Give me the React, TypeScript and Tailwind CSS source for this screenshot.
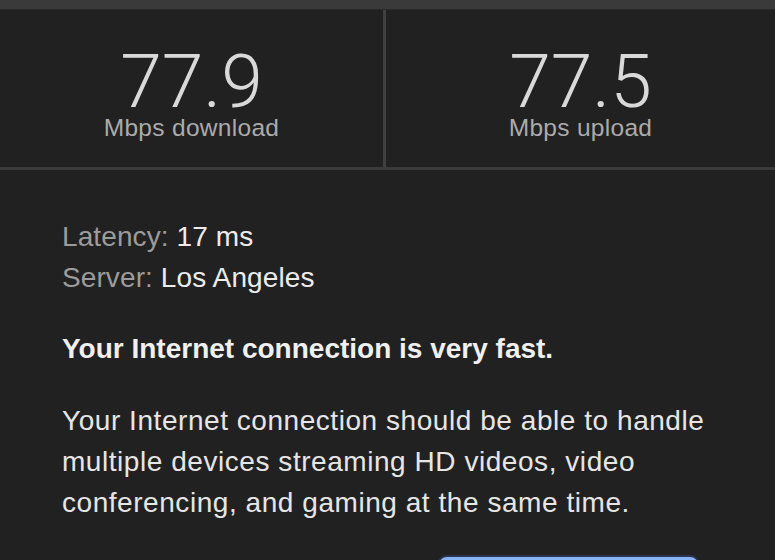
import React from "react";

export default function App() {
  const body = { fontFamily: '"Liberation Sans", Arial, sans-serif' };
  const num = { fontFamily: 'Roboto, "Liberation Sans", sans-serif' };
  return (
    <div className="w-[775px] h-[560px] overflow-hidden bg-[#212121]" style={body}>
      <div className="h-[10px] bg-[#3a3a3a] border-b border-[#2a2a2a]" />
      <div className="grid grid-cols-[386px_1fr] h-[160px] border-b-[3px] border-[#3a3a3a]">
        <div className="flex flex-col items-center pt-[38px] border-r-[3px] border-[#404040]">
          <div className="text-[75px] leading-[66px] font-light text-[#d9d9d9]" style={num}>77.9</div>
          <div className="text-[24.5px] leading-[28px] tracking-[0.3px] text-[#ababab]">Mbps download</div>
        </div>
        <div className="flex flex-col items-center pt-[38px]">
          <div className="text-[75px] leading-[66px] font-light text-[#d9d9d9]" style={num}>77.5</div>
          <div className="text-[24.5px] leading-[28px] tracking-[0.3px] text-[#ababab]">Mbps upload</div>
        </div>
      </div>
      <div className="px-[62px] pt-[46px] text-[28px] leading-[41px] tracking-[0.55px]">
        <div className="tracking-[0.1px]">
          <span className="text-[#9c9c9c]">Latency: </span>
          <span className="text-[#ececec]">17 ms</span>
        </div>
        <div className="tracking-[0.1px]">
          <span className="text-[#9c9c9c]">Server: </span>
          <span className="text-[#ececec]">Los Angeles</span>
        </div>
        <p className="mt-[30px] font-semibold text-[#f0f0f0] tracking-[0px]">Your Internet connection is very fast.</p>
        <p className="mt-[31px] text-[#e6e6e6]">
          Your Internet connection should be able to handle multiple devices streaming HD videos, video conferencing, and gaming at the same time.
        </p>
        <div className="flex justify-end pr-[13px] mt-[32px]">
          <div className="w-[263px] h-[48px] shrink-0 rounded-[10px] bg-[#8ab4f8] border-2 border-[#2b3352]" />
        </div>
      </div>
    </div>
  );
}
